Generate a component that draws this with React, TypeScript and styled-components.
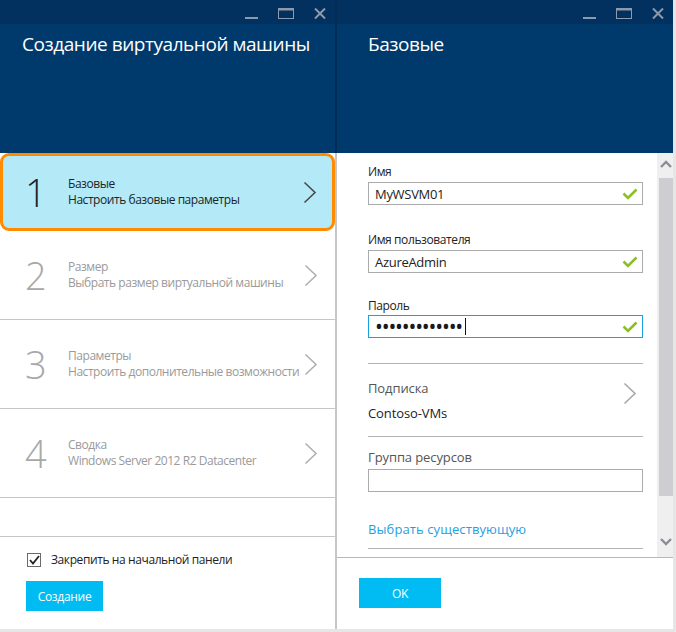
import React from 'react';
import styled, { createGlobalStyle } from 'styled-components';

const Global = createGlobalStyle`
  html, body { margin: 0; padding: 0; background: #e6e6e6; }
  body { font-family: "Open Sans", "Noto Sans", sans-serif; -webkit-font-smoothing: antialiased; }
  * { box-sizing: border-box; }
`;

const Shell = styled.div`
  display: flex;
  width: 673px;
  height: 629px;
`;

const Panel = styled.section<{ $w: number }>`
  width: ${p => p.$w}px;
  display: flex;
  flex-direction: column;
  background: #fff;
  overflow: hidden;
`;

const Divider = styled.div`
  width: 2px;
  flex: none;
  background: linear-gradient(#022b56 0 153px, #c6c6c6 153px);
`;

const Header = styled.header`
  height: 153px;
  flex: none;
  background: #003a6c;
  display: flex;
  flex-direction: column;
`;

const TitleBar = styled.div`
  height: 24px;
  background: #02315f;
  display: flex;
  justify-content: flex-end;
  align-items: flex-start;
  padding: 7px 9px 0 0;
  gap: 20px;
  color: #8d9aab;
`;

const Title = styled.h1<{ $pl: number }>`
  margin: 0;
  padding: 7px 0 0 ${p => p.$pl}px;
  font-size: 19px;
  line-height: 26px;
  font-weight: 400;
  color: #fff;
  letter-spacing: -0.45px;
`;

const Minimize = () => (
  <svg width="13" height="13" viewBox="0 0 13 13"><rect x="0" y="10" width="13" height="2" fill="currentColor" /></svg>
);
const Maximize = () => (
  <svg width="16" height="13" viewBox="0 0 16 13" fill="none"><rect x="0.5" y="1.5" width="15" height="10" stroke="currentColor" strokeWidth="1" /><rect x="0" y="1" width="16" height="2.5" fill="currentColor" /></svg>
);
const Close = () => (
  <svg width="12" height="13" viewBox="0 0 12 13"><path d="M1 1.5 L11 11.5 M11 1.5 L1 11.5" stroke="currentColor" strokeWidth="2" /></svg>
);

const WindowButtons = () => (
  <TitleBar>
    <Minimize />
    <Maximize />
    <Close />
  </TitleBar>
);

/* ---------- left panel ---------- */

const LeftBody = styled.div`
  flex: 1;
  display: flex;
  flex-direction: column;
`;

const Step = styled.div<{ $active?: boolean }>`
  display: flex;
  align-items: center;
  flex: none;
  height: ${p => (p.$active ? 78 : 89)}px;
  padding-left: ${p => (p.$active ? 22 : 25)}px;
  padding-right: ${p => (p.$active ? 15 : 17)}px;
  background: ${p => (p.$active ? '#b4eaf8' : '#fff')};
  border: ${p => (p.$active ? '3px solid #ff8c00' : 'none')};
  border-bottom: ${p => (p.$active ? '3px solid #ff8c00' : '1px solid #c6c6c6')};
  border-radius: ${p => (p.$active ? '9px' : '0')};
  color: ${p => (p.$active ? '#222' : '#9a9a9a')};
`;

const StepNum = styled.div<{ $active?: boolean }>`
  width: 43px;
  flex: none;
  font-size: 38px;
  line-height: 40px;
  font-weight: 300;
  color: ${p => (p.$active ? '#222' : '#a8a8a8')};
`;

const StepText = styled.div`
  flex: 1;
  min-width: 0;
  font-size: 12px;
  line-height: 16px;
  letter-spacing: -0.45px;
  white-space: nowrap;
`;

const Chevron = ({ color }: { color: string }) => (
  <svg width="14" height="23" viewBox="0 0 14 23" fill="none" style={{ flex: 'none' }}>
    <path d="M1.5 1.5 L12 11.5 L1.5 21.5" stroke={color} strokeWidth="1.6" />
  </svg>
);

const LeftFooter = styled.div`
  margin-top: auto;
  height: 93px;
  border-top: 1px solid #c6c6c6;
  padding: 15px 0 0 26px;
  display: flex;
  flex-direction: column;
  align-items: flex-start;
  gap: 13px;
`;

const CheckRow = styled.label`
  display: flex;
  align-items: center;
  gap: 10px;
  padding-left: 1px;
  font-size: 12px;
  line-height: 16px;
  color: #222;
  letter-spacing: -0.4px;
`;

const CheckBox = styled.span`
  width: 14px;
  height: 14px;
  border: 1px solid #6a6a6a;
  display: flex;
  align-items: center;
  justify-content: center;
`;

const PrimaryButton = styled.button<{ $w: number }>`
  width: ${p => p.$w}px;
  height: 30px;
  border: none;
  background: #00bcf2;
  color: #fff;
  font-family: inherit;
  font-size: 12px;
  letter-spacing: -0.3px;
  padding: 0;
`;

/* ---------- right panel ---------- */

const RightBody = styled.div`
  height: 404px;
  flex: none;
  display: flex;
`;

const Form = styled.div`
  flex: 1;
  padding: 11px 14px 0 31px;
  overflow: hidden;
`;

const Label = styled.div<{ $size?: number; $mt: number; $mb: number }>`
  font-size: ${p => p.$size ?? 12}px;
  line-height: ${p => (p.$size ? 18 : 16)}px;
  margin: ${p => p.$mt}px 0 ${p => p.$mb}px;
  color: ${p => (p.$size ? '#555' : '#222')};
  letter-spacing: ${p => (p.$size ? '-0.1px' : '-0.4px')};
`;

const Input = styled.div<{ $focus?: boolean }>`
  height: 23px;
  border: 1px solid ${p => (p.$focus ? '#1ba1e2' : '#ababab')};
  display: flex;
  align-items: center;
  padding: 0 4px 0 6px;
  font-size: 13px;
  color: #222;
  letter-spacing: -0.3px;
`;

const InputValue = styled.span`
  flex: 1;
  display: flex;
  align-items: center;
  height: 100%;
`;

const Dots = styled.span`
  font-size: 21px;
  letter-spacing: -1.2px;
  line-height: 21px;
  height: 21px;
  color: #1a1a1a;
`;

const Caret = styled.span`
  width: 1px;
  height: 17px;
  background: #111;
  margin-left: 3px;
`;

const Check = () => (
  <svg width="16" height="12" viewBox="0 0 16 12" fill="none">
    <path d="M1.5 5.5 L6 10 L14.5 1.5" stroke="#8cbf26" strokeWidth="2.6" />
  </svg>
);

const Separator = styled.div<{ $mt: number }>`
  height: 1px;
  background: #b4b4b4;
  margin-top: ${p => p.$mt}px;
`;

const PickerRow = styled.div`
  display: flex;
  align-items: center;
  justify-content: space-between;
  padding-right: 6px;
`;

const Value = styled.div`
  font-size: 13px;
  line-height: 18px;
  margin-top: 7px;
  color: #222;
  letter-spacing: -0.1px;
`;

const Link = styled.div`
  font-size: 13px;
  line-height: 18px;
  margin-top: 28px;
  color: #1e9fe0;
  letter-spacing: 0.1px;
`;

const ScrollTrack = styled.div`
  width: 16px;
  flex: none;
  background: #efeff0;
  display: flex;
  flex-direction: column;
  align-items: flex-end;
`;

const ScrollArrow = styled.div<{ $bottom?: boolean }>`
  width: 14px;
  height: 22px;
  display: flex;
  align-items: center;
  justify-content: center;
  color: #8d8d96;
  margin-top: ${p => (p.$bottom ? 'auto' : '0')};
  margin-bottom: ${p => (p.$bottom ? '4px' : '0')};
`;

const ScrollThumb = styled.div`
  width: 14px;
  height: 318px;
  margin-top: 3px;
  background: #cdcdd2;
`;

const RightFooter = styled.div`
  flex: 1;
  border-top: 1px solid #b8b8b8;
  padding: 20px 0 0 22px;
`;

const Arrow = ({ up }: { up?: boolean }) => (
  <svg width="12" height="8" viewBox="0 0 12 8" fill="none">
    <path d={up ? 'M1 7 L6 2 L11 7' : 'M1 1 L6 6 L11 1'} stroke="currentColor" strokeWidth="2.4" />
  </svg>
);

const steps = [
  { n: '1', t: 'Базовые', s: 'Настроить базовые параметры' },
  { n: '2', t: 'Размер', s: 'Выбрать размер виртуальной машины' },
  { n: '3', t: 'Параметры', s: 'Настроить дополнительные возможности' },
  { n: '4', t: 'Сводка', s: 'Windows Server 2012 R2 Datacenter' },
];

export default function App() {
  return (
    <>
      <Global />
      <Shell>
        <Panel $w={335}>
          <Header>
            <WindowButtons />
            <Title $pl={22}>Создание виртуальной машины</Title>
          </Header>
          <LeftBody>
            {steps.map((st, i) => (
              <Step key={st.n} $active={i === 0}>
                <StepNum $active={i === 0}>{st.n}</StepNum>
                <StepText>
                  <div>{st.t}</div>
                  <div>{st.s}</div>
                </StepText>
                <Chevron color={i === 0 ? '#4a4a4a' : '#b0b0b0'} />
              </Step>
            ))}
            <LeftFooter>
              <CheckRow>
                <CheckBox>
                  <svg width="11" height="10" viewBox="0 0 11 10" fill="none">
                    <path d="M1 5 L4 8.5 L10 1" stroke="#222" strokeWidth="1.8" />
                  </svg>
                </CheckBox>
                Закрепить на начальной панели
              </CheckRow>
              <PrimaryButton $w={77}>Создание</PrimaryButton>
            </LeftFooter>
          </LeftBody>
        </Panel>
        <Divider />
        <Panel $w={336}>
          <Header>
            <WindowButtons />
            <Title $pl={31}>Базовые</Title>
          </Header>
          <RightBody>
            <Form>
              <Label $mt={0} $mb={2}>Имя</Label>
              <Input>
                <InputValue>MyWSVM01</InputValue>
                <Check />
              </Input>
              <Label $mt={27} $mb={2}>Имя пользователя</Label>
              <Input>
                <InputValue>AzureAdmin</InputValue>
                <Check />
              </Input>
              <Label $mt={25} $mb={1}>Пароль</Label>
              <Input $focus>
                <InputValue>
                  <Dots>•••••••••••••</Dots>
                  <Caret />
                </InputValue>
                <Check />
              </Input>
              <Separator $mt={25} />
              <PickerRow>
                <div>
                  <Label $size={13} $mt={15} $mb={0}>Подписка</Label>
                  <Value>Contoso-VMs</Value>
                </div>
                <Chevron color="#a8a8a8" />
              </PickerRow>
              <Separator $mt={14} />
              <Label $size={13} $mt={11} $mb={3}>Группа ресурсов</Label>
              <Input />
              <Link>Выбрать существующую</Link>
              <Separator $mt={10} />
            </Form>
            <ScrollTrack>
              <ScrollArrow><Arrow up /></ScrollArrow>
              <ScrollThumb />
              <ScrollArrow $bottom><Arrow /></ScrollArrow>
            </ScrollTrack>
          </RightBody>
          <RightFooter>
            <PrimaryButton $w={82}>OK</PrimaryButton>
          </RightFooter>
        </Panel>
      </Shell>
    </>
  );
}
